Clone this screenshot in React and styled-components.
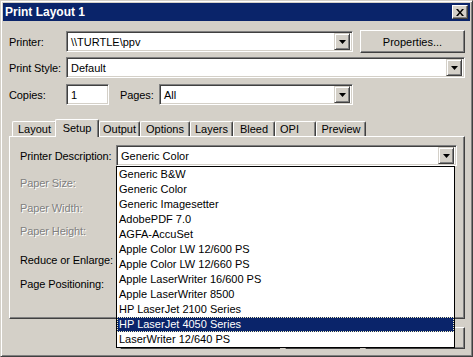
import React from 'react';
import styled, { createGlobalStyle } from 'styled-components';

const face = '#d4d0c8';
const shadow = '#808080';
const dark = '#404040';
const navy = '#0a246a';

const GlobalStyle = createGlobalStyle`
  html, body {
    margin: 0;
    padding: 0;
    background: ${face};
  }
  body {
    font-family: "Liberation Sans", Arial, sans-serif;
    font-size: 11px;
    color: #000;
  }
`;

const Window = styled.div`
  position: relative;
  box-sizing: border-box;
  width: 473px;
  height: 357px;
  background: ${face};
  border: 1px solid;
  border-color: ${face} ${dark} ${dark} ${face};
  box-shadow: inset 1px 1px #fff, inset -1px -1px ${shadow};
  padding: 2px;
  display: flex;
  flex-direction: column;
`;

const TitleBar = styled.div`
  height: 18px;
  flex: none;
  background: ${navy};
  display: flex;
  align-items: center;
  justify-content: space-between;
  padding: 0 2px 0 2px;
`;

const Title = styled.span`
  color: #fff;
  font-weight: bold;
  font-size: 12px;
`;

const CloseButton = styled.div`
  box-sizing: border-box;
  width: 16px;
  height: 14px;
  background: ${face};
  border: 1px solid;
  border-color: #fff ${dark} ${dark} #fff;
  box-shadow: inset -1px -1px ${shadow};
  display: flex;
  align-items: center;
  justify-content: center;
`;

const Body = styled.div`
  padding: 9px 5px 0 6px;
  display: flex;
  flex-direction: column;
`;

const Row = styled.div`
  display: flex;
  align-items: center;
  height: ${p => p.$h || 21}px;
  margin-top: ${p => p.$mt || 0}px;
`;

const Label = styled.span`
  width: ${p => p.$w}px;
  flex: none;
  white-space: nowrap;
  padding-left: ${p => p.$pl || 0}px;
  box-sizing: border-box;
  letter-spacing: -0.1px;
  color: ${p => (p.$disabled ? shadow : '#000')};
  text-shadow: ${p => (p.$disabled ? '1px 1px 0 #fff' : 'none')};
`;

const Sunken = styled.div`
  box-sizing: border-box;
  width: ${p => p.$w}px;
  height: 21px;
  flex: none;
  display: flex;
  align-items: center;
  background: #fff;
  border: 1px solid;
  border-color: ${shadow} #fff #fff ${shadow};
  box-shadow: inset 1px 1px ${dark}, inset -1px -1px ${face};
  padding: 2px;
`;

const FieldText = styled.span`
  flex: 1;
  padding-left: 2px;
  white-space: nowrap;
  overflow: hidden;
`;

const DropButton = styled.div`
  box-sizing: border-box;
  width: 16px;
  height: 17px;
  flex: none;
  background: ${face};
  border: 1px solid;
  border-color: ${face} ${dark} ${dark} ${face};
  box-shadow: inset 1px 1px #fff, inset -1px -1px ${shadow};
  display: flex;
  align-items: center;
  justify-content: center;
`;

const PushButton = styled.div`
  box-sizing: border-box;
  width: ${p => p.$w}px;
  height: ${p => p.$h || 23}px;
  flex: none;
  margin-left: ${p => p.$ml || 0}px;
  background: ${face};
  border: 1px solid;
  border-color: #fff ${dark} ${dark} #fff;
  box-shadow: inset -1px -1px ${shadow};
  display: flex;
  align-items: center;
  justify-content: center;
  white-space: nowrap;
`;

const TabStrip = styled.div`
  display: flex;
  align-items: flex-end;
  height: 17px;
  margin-top: 14px;
  padding-left: 3px;
  position: relative;
  z-index: 1;
`;

const Tab = styled.div`
  box-sizing: border-box;
  width: ${p => p.$w}px;
  height: ${p => (p.$active ? 18 : 15)}px;
  margin-left: ${p => (p.$active ? -2 : 0)}px;
  margin-bottom: ${p => (p.$active ? -1 : 0)}px;
  background: ${face};
  border-top: 1px solid #fff;
  border-left: 1px solid #fff;
  border-right: 1px solid ${dark};
  border-top-left-radius: 2px;
  border-top-right-radius: 2px;
  box-shadow: inset -1px 0 ${shadow};
  display: flex;
  align-items: ${p => (p.$active ? 'flex-start' : 'center')};
  padding-top: ${p => (p.$active ? 2 : 0)}px;
  justify-content: ${p => (p.$left ? 'flex-start' : 'center')};
  padding-left: ${p => (p.$left ? 4 : 0)}px;
  white-space: nowrap;
`;

const Panel = styled.div`
  box-sizing: border-box;
  height: 183px;
  background: ${face};
  border: 1px solid;
  border-color: #fff ${dark} ${dark} #fff;
  box-shadow: inset -1px -1px ${shadow};
  padding: 8px 0 0 10px;
  display: flex;
  flex-direction: column;
`;

const ButtonRow = styled.div`
  display: flex;
  justify-content: flex-end;
  gap: 5px;
  margin-top: 8px;
`;

const DropList = styled.div`
  position: absolute;
  left: 115px;
  top: 165px;
  width: 339px;
  height: 182px;
  box-sizing: border-box;
  background: #fff;
  border: 1px solid #000;
  z-index: 5;
`;

const ListItem = styled.div`
  height: 15px;
  line-height: 15px;
  padding-left: 2px;
  white-space: nowrap;
  background: ${p => (p.$selected ? navy : 'transparent')};
  color: ${p => (p.$selected ? '#fff' : '#000')};
  outline: ${p => (p.$selected ? '1px dotted #f4f0c0' : 'none')};
  outline-offset: -1px;
`;

const Arrow = () => (
  <svg width="7" height="4" viewBox="0 0 7 4">
    <polygon points="0,0 7,0 3.5,4" fill="#000" />
  </svg>
);

const Combo = ({ w, value }) => (
  <Sunken $w={w}>
    <FieldText>{value}</FieldText>
    <DropButton>
      <Arrow />
    </DropButton>
  </Sunken>
);

const tabs = [
  { name: 'Layout', w: 45 },
  { name: 'Setup', w: 44, active: true },
  { name: 'Output', w: 41 },
  { name: 'Options', w: 50 },
  { name: 'Layers', w: 43 },
  { name: 'Bleed', w: 42 },
  { name: 'OPI', w: 41, left: true },
  { name: 'Preview', w: 50 },
];

const printers = [
  'Generic B&W',
  'Generic Color',
  'Generic Imagesetter',
  'AdobePDF 7.0',
  'AGFA-AccuSet',
  'Apple Color LW 12/600 PS',
  'Apple Color LW 12/660 PS',
  'Apple LaserWriter 16/600 PS',
  'Apple LaserWriter 8500',
  'HP LaserJet 2100 Series',
  'HP LaserJet 4050 Series',
  'LaserWriter 12/640 PS',
];

export default function App() {
  return (
    <>
      <GlobalStyle />
      <Window>
        <TitleBar>
          <Title>Print Layout 1</Title>
          <CloseButton>
            <svg width="8" height="7" viewBox="0 0 8 7">
              <path d="M0 0h2l2 2.5L6 0h2L5 3.5 8 7H6L4 4.5 2 7H0l3-3.5z" fill="#000" />
            </svg>
          </CloseButton>
        </TitleBar>
        <Body>
          <Row $h={23}>
            <Label $w={57}>Printer:</Label>
            <Combo w={287} value={'\\\\TURTLE\\ppv'} />
            <PushButton $w={105} $ml={7}>Properties...</PushButton>
          </Row>
          <Row $mt={4}>
            <Label $w={57}>Print Style:</Label>
            <Combo w={399} value="Default" />
          </Row>
          <Row $mt={6}>
            <Label $w={57}>Copies:</Label>
            <Sunken $w={43}>
              <FieldText>1</FieldText>
            </Sunken>
            <Label $w={50} $pl={11}>Pages:</Label>
            <Combo w={194} value="All" />
          </Row>
          <TabStrip>
            {tabs.map(t => (
              <Tab key={t.name} $w={t.w} $active={t.active} $left={t.left}>
                {t.name}
              </Tab>
            ))}
          </TabStrip>
          <Panel>
            <Row>
              <Label $w={96}>Printer Description:</Label>
              <Combo w={341} value="Generic Color" />
            </Row>
            <Row $mt={6}>
              <Label $w={96} $disabled>Paper Size:</Label>
            </Row>
            <Row $mt={4}>
              <Label $w={96} $disabled>Paper Width:</Label>
            </Row>
            <Row $mt={2}>
              <Label $w={96} $disabled>Paper Height:</Label>
            </Row>
            <Row $mt={8}>
              <Label $w={96}>Reduce or Enlarge:</Label>
            </Row>
            <Row $mt={3}>
              <Label $w={96}>Page Positioning:</Label>
            </Row>
          </Panel>
          {/* dialog buttons sit behind the open list; only their edges show */}
          <ButtonRow>
            <PushButton $w={160} $h={22} />
            <PushButton $w={75} $h={22} />
            <PushButton $w={100} $h={22} />
          </ButtonRow>
        </Body>
        <DropList>
          {printers.map((p, i) => (
            <ListItem key={p} $selected={i === 10}>
              {p}
            </ListItem>
          ))}
        </DropList>
      </Window>
    </>
  );
}
